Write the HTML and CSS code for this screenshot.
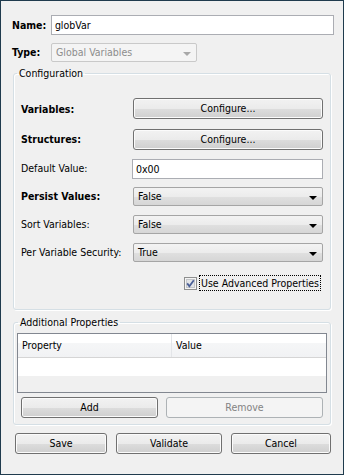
FILE: index.html
```html
<!DOCTYPE html>
<html lang="en">
<head>
    <meta charset="UTF-8">
    <meta name="viewport" content="width=device-width, initial-scale=1.0">
    <title>Global Variables</title>
    <link rel="stylesheet" href="styles.css">
</head>
<body>
    <div class="dialog">
        <div class="top-row name-row">
            <label class="top-label bold">Name:</label>
            <input class="edit name-edit" type="text" value="globVar">
        </div>
        <div class="top-row type-row">
            <label class="top-label bold">Type:</label>
            <div class="combo combo-disabled type-combo">
                <span class="combo-text">Global Variables</span>
                <span class="arrow"></span>
            </div>
        </div>

        <fieldset class="group config-group">
            <legend>Configuration</legend>
            <div class="form-grid">
                <label class="bold">Variables:</label>
                <button class="btn">Configure...</button>

                <label class="bold">Structures:</label>
                <button class="btn">Configure...</button>

                <label>Default Value:</label>
                <input class="edit" type="text" value="0x00">

                <label class="bold">Persist Values:</label>
                <div class="combo"><span class="combo-text">False</span><span class="arrow"></span></div>

                <label>Sort Variables:</label>
                <div class="combo"><span class="combo-text">False</span><span class="arrow"></span></div>

                <label>Per Variable Security:</label>
                <div class="combo"><span class="combo-text">True</span><span class="arrow"></span></div>
            </div>
            <div class="check-row">
                <span class="checkbox">
                    <svg width="13" height="13" viewBox="0 0 13 13">
                        <rect x="0.5" y="0.5" width="12" height="12" fill="#f4f4f4" stroke="#8e8f8f"/>
                        <rect x="2.5" y="2.5" width="8" height="8" fill="#e2e4e7" stroke="#c4c6c9"/>
                        <path d="M3.2 6.4 L5.4 9.2 L9.8 3.2" fill="none" stroke="#4a5f97" stroke-width="1.8"/>
                    </svg>
                </span>
                <span class="check-label">Use Advanced Properties</span>
            </div>
        </fieldset>

        <fieldset class="group extra-group">
            <legend>Additional Properties</legend>
            <div class="table">
                <div class="table-head">
                    <div class="th th-property">Property</div>
                    <div class="th">Value</div>
                </div>
                <div class="table-row"></div>
            </div>
            <div class="table-buttons">
                <button class="btn">Add</button>
                <button class="btn" disabled>Remove</button>
            </div>
        </fieldset>

        <div class="footer">
            <button class="btn save-btn">Save</button>
            <button class="btn validate-btn">Validate</button>
            <button class="btn cancel-btn">Cancel</button>
        </div>
    </div>
</body>
</html>
```

FILE: styles.css
```css
body {
    margin: 0;
    font-family: "DejaVu Sans Condensed", "DejaVu Sans", sans-serif;
    font-size: 10.5px;
    line-height: 13px;
    color: #000;
}

.dialog {
    box-sizing: border-box;
    width: 344px;
    height: 475px;
    border: 1px solid #1f3b4d;
    background-color: #f0f0f0;
    padding: 14px 9px 0 10px;
}

.bold {
    font-weight: bold;
}

/* name / type rows */
.top-row {
    display: flex;
    align-items: center;
}

.top-label {
    width: 39px;
    padding-left: 1px;
}

.type-row {
    margin-top: 8px;
}

.edit {
    box-sizing: border-box;
    height: 20px;
    margin: 0;
    padding: 0 3px;
    border: 1px solid #abadb3;
    background: #fff;
    font: inherit;
    color: #000;
    outline: none;
}

.name-edit {
    width: 284px;
}

/* combo boxes */
.combo {
    box-sizing: border-box;
    display: flex;
    align-items: center;
    justify-content: space-between;
    height: 19px;
    padding: 0 5px 0 4px;
    border: 1px solid #a5a5a5;
    border-radius: 2px;
    background: linear-gradient(#f3f3f3 0%, #ececec 50%, #e0e0e0 51%, #d6d6d6 100%);
}

.arrow {
    width: 0;
    height: 0;
    border-left: 4px solid transparent;
    border-right: 4px solid transparent;
    border-top: 4px solid #000;
    margin-top: 2px;
}

.combo-disabled {
    width: 146px;
    border-color: #c9c9c9;
    background: #f4f4f4;
    color: #8d8d8d;
}

.combo-disabled .arrow {
    border-top-color: #a8a8a8;
}

/* group boxes */
.group {
    margin: 0;
    border: 1px solid #d5dfe5;
    border-radius: 3px;
    box-shadow: inset 1px 1px 0 #fff, 1px 1px 0 #fff;
    min-width: 0;
}

.group legend {
    padding: 0 2px;
}

.config-group {
    margin: 5px 3px 0 2px;
    padding: 18px 7px 19px 7px;
}

.config-group legend {
    margin-left: -4px;
}

.form-grid {
    display: grid;
    grid-template-columns: 112px 190px;
    grid-template-rows: 22px 21px 19px 19px 19px 19px;
    row-gap: 9px;
}

.form-grid label {
    align-self: center;
}

.form-grid .btn,
.form-grid .edit {
    align-self: start;
    width: 190px;
}

.form-grid .edit {
    margin-left: -1px;
    width: 191px;
}

.check-row {
    display: flex;
    align-items: center;
    justify-content: flex-end;
    margin-top: 14px;
    margin-right: 3px;
}

.checkbox {
    display: flex;
    margin-right: 3px;
}

.check-label {
    padding: 0 1px;
    line-height: 14px;
    outline: 1px dotted #000;
}

/* additional properties */
.extra-group {
    margin: 6px 3px 0 2px;
    padding: 4px 3px 6px 3px;
}

.extra-group legend {
    margin-left: 1px;
}

.table {
    height: 60px;
    box-sizing: border-box;
    border: 1px solid #828790;
    background: #f0f0f0;
}

.table-head {
    display: flex;
    height: 23px;
    border-bottom: 1px solid #d5d5d5;
    background: linear-gradient(#ffffff 0%, #ffffff 40%, #f5f6f7 41%, #f1f2f4 100%);
}

.th {
    display: flex;
    align-items: center;
    padding-left: 4px;
}

.th-property {
    width: 149px;
    border-right: 1px solid #e3e5e8;
}

.table-row {
    height: 18px;
    background: #fff;
}

.table-buttons {
    display: grid;
    grid-template-columns: 137px 157px;
    column-gap: 8px;
    margin-top: 4px;
    padding-left: 4px;
}

/* buttons */
.btn {
    box-sizing: border-box;
    height: 21px;
    margin: 0;
    padding: 0;
    border: 1px solid #707070;
    border-radius: 3px;
    background: linear-gradient(#f2f2f2 0%, #ebebeb 50%, #dddddd 51%, #cfcfcf 100%);
    box-shadow: inset 0 0 0 1px #fbfbfb;
    font: inherit;
    color: #000;
}

.btn:disabled {
    border-color: #adb2b5;
    background: #f4f4f4;
    box-shadow: none;
    color: #838383;
}

.footer {
    display: flex;
    gap: 9px;
    margin: 8px 0 0 4px;
}

.save-btn {
    width: 92px;
}

.validate-btn {
    width: 106px;
}

.cancel-btn {
    width: 100px;
}
```
